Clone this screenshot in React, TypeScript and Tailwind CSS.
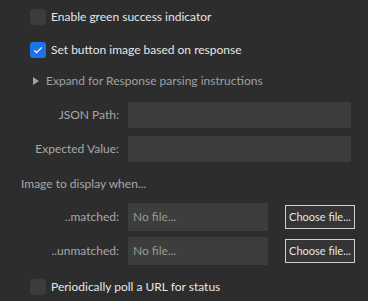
import React from 'react';

const font = { fontFamily: 'Lato, "Noto Sans", sans-serif' };

function Check({ checked, label }: { checked?: boolean; label: string }) {
  return (
    <label className="flex items-center h-4 pl-[30px] text-[12px] text-[#e6e6e6]">
      <span
        className={`w-4 h-4 rounded-[3px] flex items-center justify-center shrink-0 ${
          checked ? 'bg-[#1a73e8]' : 'bg-[#3c3c3c]'
        }`}
      >
        {checked && (
          <svg viewBox="0 0 16 16" className="w-3 h-3" fill="none" stroke="white" strokeWidth="1.8">
            <path d="M3 8.5l3 3 7-7" />
          </svg>
        )}
      </span>
      <span className="ml-[5px] leading-none">{label}</span>
    </label>
  );
}

function FieldRow({ label, top }: { label: string; top: string }) {
  return (
    <div className={`flex items-center h-[26px] ${top}`}>
      <span className="w-[119px] text-right text-[12px] text-[#a8a8a8]">{label}</span>
      <div className="ml-[9px] w-[223px] h-[26px] bg-[#3d3d3d]" />
    </div>
  );
}

function FileRow({ label, top }: { label: string; top: string }) {
  return (
    <div className={`flex items-center h-[28px] ${top}`}>
      <span className="w-[119px] text-right text-[12px] text-[#a8a8a8]">{label}</span>
      <div className="ml-[9px] w-[140px] h-[28px] bg-[#3d3d3d] flex items-center pl-[5px] text-[12px] text-[#9a9a9a]">
        No file...
      </div>
      <button
        type="button"
        className="ml-[17px] w-[70px] h-[24px] border border-[#cfcfcf] bg-[#353535] text-[11px] text-[#e6e6e6] flex items-center justify-center whitespace-nowrap"
      >
        Choose file...
      </button>
    </div>
  );
}

export default function App() {
  return (
    <div className="w-[368px] h-[301px] bg-[#2d2d2d] overflow-hidden" style={font}>
      <div className="pt-[9px]">
        <Check label="Enable green success indicator" />
        <div className="mt-[17px]">
          <Check checked label="Set button image based on response" />
        </div>
        <div className="mt-[15px] flex items-center h-[16px] pl-[33px] text-[12px] text-[#a0a0a0]">
          <svg viewBox="0 0 6 8" className="w-[6px] h-[8px]" fill="#a0a0a0">
            <path d="M0 0l6 4-6 4z" />
          </svg>
          <span className="ml-[7px]">Expand for Response parsing instructions</span>
        </div>
        <FieldRow label="JSON Path:" top="mt-[13px]" />
        <FieldRow label="Expected Value:" top="mt-[8px]" />
        <div className="mt-[14px] pl-[21px] h-[16px] flex items-center text-[12px] text-[#a8a8a8]">
          Image to display when...
        </div>
        <FileRow label="..matched:" top="mt-[11px]" />
        <FileRow label="..unmatched:" top="mt-[6px]" />
        <div className="mt-[14px]">
          <Check label="Periodically poll a URL for status" />
        </div>
      </div>
    </div>
  );
}
